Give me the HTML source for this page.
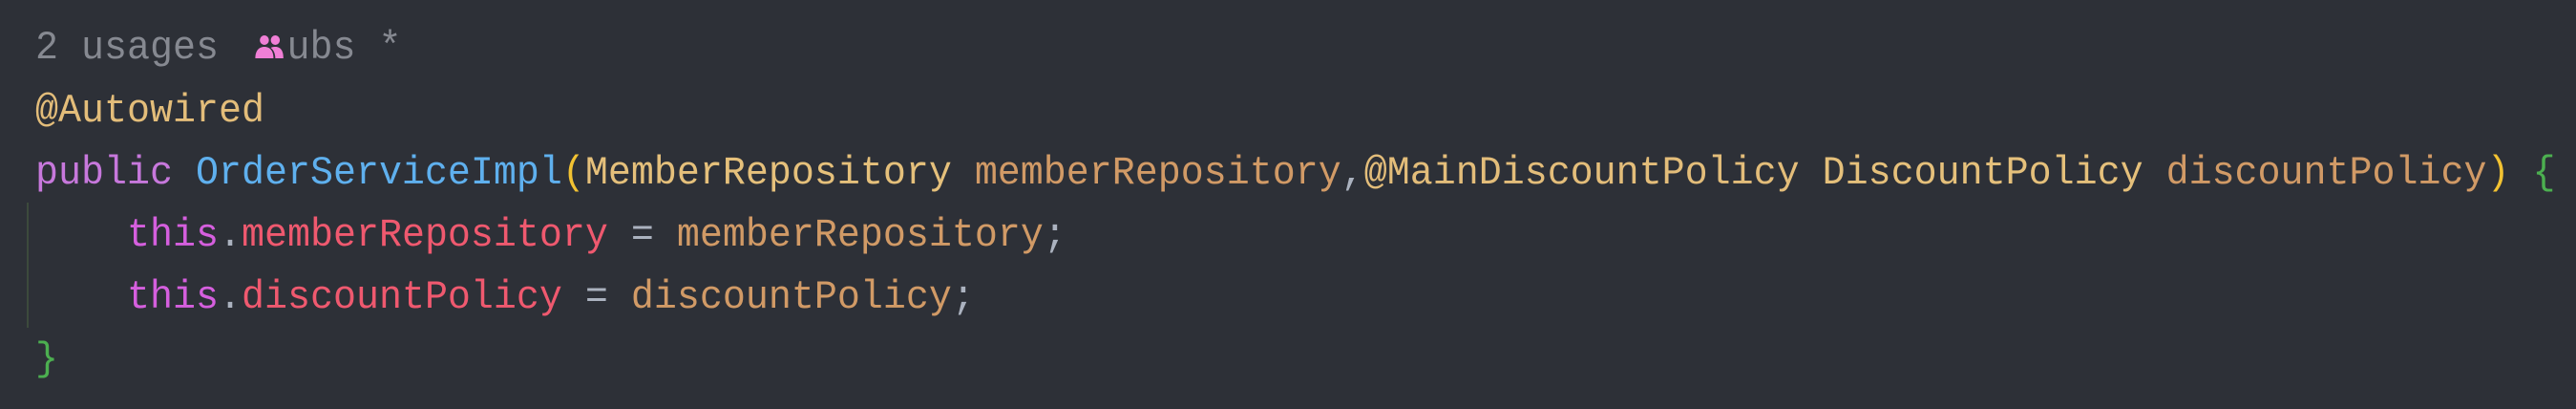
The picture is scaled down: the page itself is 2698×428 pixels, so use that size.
<!DOCTYPE html>
<html><head><meta charset="utf-8"><style>
html,body{margin:0;padding:0;}
body{width:2698px;height:428px;background:#2d3037;overflow:hidden;position:relative;font-family:"Liberation Mono",monospace;font-size:42px;}
.l{position:absolute;left:37px;white-space:pre;line-height:40px;transform:scaleX(0.952);transform-origin:0 0;}
.g{color:#868991}.an{color:#e3bd7a}.kw{color:#c778dc}.fn{color:#5fb0ee}.ty{color:#e5c07b}.pa{color:#d19a66}
.th{color:#d55fde}.fd{color:#ef596f}.op{color:#abb2bf}.br{color:#f2c232}.cb{color:#4caf50}
.gut{position:absolute;left:28px;top:212px;width:2px;height:131px;background:#3c4a3c;}
</style></head><body>
<div class="gut"></div>
<div class="l g" style="top:30px">2 usages <svg width="32" height="28" viewBox="0 0 32 28" style="vertical-align:-2px;margin-left:14px;margin-right:4px"><circle cx="11" cy="7" r="5" fill="#f07fd6"/><circle cx="23" cy="7" r="5" fill="#f07fd6"/><path d="M1 26 C1 17 6 14 11 14 C16 14 21 17 21 26Z" fill="#f07fd6"/><path d="M18 15 C20 14 22 14 23 14 C28 14 32 17 32 26 L23 26 C23 21 21 17 18 15Z" fill="#f07fd6"/></svg>ubs *</div>
<div class="l an" style="top:96px">@Autowired</div>
<div class="l" style="top:161px"><span class="kw">public</span> <span class="fn">OrderServiceImpl</span><span class="br">(</span><span class="ty">MemberRepository</span> <span class="pa">memberRepository</span><span class="op">,</span><span class="an">@MainDiscountPolicy</span> <span class="ty">DiscountPolicy</span> <span class="pa">discountPolicy</span><span class="br">)</span> <span class="cb">{</span></div>
<div class="l" style="top:226px">    <span class="th">this</span><span class="op">.</span><span class="fd">memberRepository</span> <span class="op">=</span> <span class="pa">memberRepository</span><span class="op">;</span></div>
<div class="l" style="top:291px">    <span class="th">this</span><span class="op">.</span><span class="fd">discountPolicy</span> <span class="op">=</span> <span class="pa">discountPolicy</span><span class="op">;</span></div>
<div class="l cb" style="top:356px">}</div>
</body></html>
